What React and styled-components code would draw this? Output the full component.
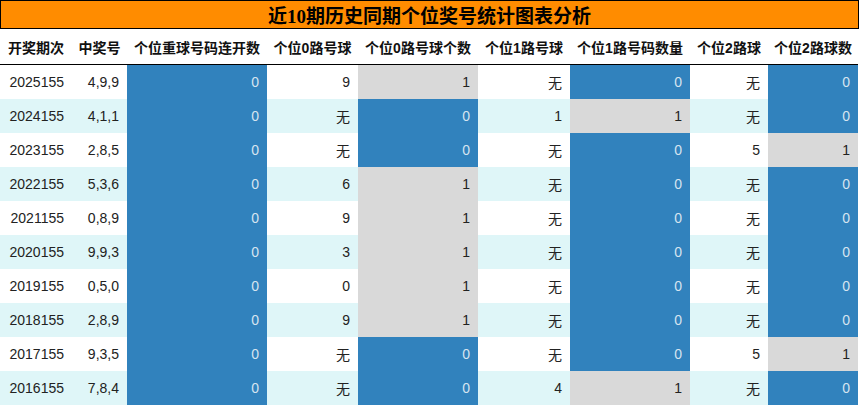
import React from "react";
import styled, { createGlobalStyle } from "styled-components";

const GlobalStyle = createGlobalStyle`
  body {
    margin: 0;
    background: #ffffff;
    font-family: "Liberation Sans", "Noto Sans CJK SC", sans-serif;
  }
`;

const Wrapper = styled.div`
  width: 859px;
`;

const Title = styled.div`
  height: 27px;
  border: 1px solid #000;
  border-bottom-width: 1px;
  background: #ff8c00;
  color: #000;
  display: flex;
  align-items: center;
  justify-content: center;
  font-family: "Liberation Serif", "Noto Sans CJK SC", serif;
  font-weight: bold;
  font-size: 19px;
`;

const Table = styled.table`
  width: 858px;
  border-collapse: collapse;
  table-layout: fixed;
  font-size: 14px;
  color: #222;
`;

const HeadCell = styled.th`
  height: 35px;
  padding: 0;
  font-weight: bold;
  text-align: center;
  white-space: nowrap;
  background: #fff;
  border-bottom: 1px solid #000;
  color: #111;
`;

const Row = styled.tr`
  background: ${(p) => (p.$alt ? "#dff6f8" : "#ffffff")};
`;

const tones = {
  blue: { bg: "#3182bd", fg: "#d6e4f0" },
  gray: { bg: "#d9d9d9", fg: "#222" },
};

const Cell = styled.td`
  height: 34px;
  box-sizing: border-box;
  padding: 0 8px;
  text-align: right;
  white-space: nowrap;
  background: ${(p) => (p.$tone ? tones[p.$tone].bg : "transparent")};
  color: ${(p) => (p.$tone ? tones[p.$tone].fg : "#222")};
`;

const columns = [
  { name: "开奖期次", width: 72 },
  { name: "中奖号", width: 55 },
  { name: "个位重球号码连开数", width: 140, count: true },
  { name: "个位0路号球", width: 91 },
  { name: "个位0路号球个数", width: 120, count: true },
  { name: "个位1路号球", width: 92 },
  { name: "个位1路号码数量", width: 120, count: true },
  { name: "个位2路球", width: 78 },
  { name: "个位2路球数", width: 90, count: true },
];

const rows = [
  ["2025155", "4,9,9", "0", "9", "1", "无", "0", "无", "0"],
  ["2024155", "4,1,1", "0", "无", "0", "1", "1", "无", "0"],
  ["2023155", "2,8,5", "0", "无", "0", "无", "0", "5", "1"],
  ["2022155", "5,3,6", "0", "6", "1", "无", "0", "无", "0"],
  ["2021155", "0,8,9", "0", "9", "1", "无", "0", "无", "0"],
  ["2020155", "9,9,3", "0", "3", "1", "无", "0", "无", "0"],
  ["2019155", "0,5,0", "0", "0", "1", "无", "0", "无", "0"],
  ["2018155", "2,8,9", "0", "9", "1", "无", "0", "无", "0"],
  ["2017155", "9,3,5", "0", "无", "0", "无", "0", "5", "1"],
  ["2016155", "7,8,4", "0", "无", "0", "4", "1", "无", "0"],
];

const toneFor = (col, value) => {
  if (!columns[col].count) return undefined;
  return value === "0" ? "blue" : "gray";
};

export default function App() {
  return (
    <Wrapper>
      <GlobalStyle />
      <Title>近10期历史同期个位奖号统计图表分析</Title>
      <Table>
        <colgroup>
          {columns.map((c) => (
            <col key={c.name} style={{ width: c.width }} />
          ))}
        </colgroup>
        <thead>
          <tr>
            {columns.map((c) => (
              <HeadCell key={c.name}>{c.name}</HeadCell>
            ))}
          </tr>
        </thead>
        <tbody>
          {rows.map((r, i) => (
            <Row key={r[0]} $alt={i % 2 === 1}>
              {r.map((v, j) => (
                <Cell key={j} $tone={toneFor(j, v)}>
                  {v}
                </Cell>
              ))}
            </Row>
          ))}
        </tbody>
      </Table>
    </Wrapper>
  );
}
